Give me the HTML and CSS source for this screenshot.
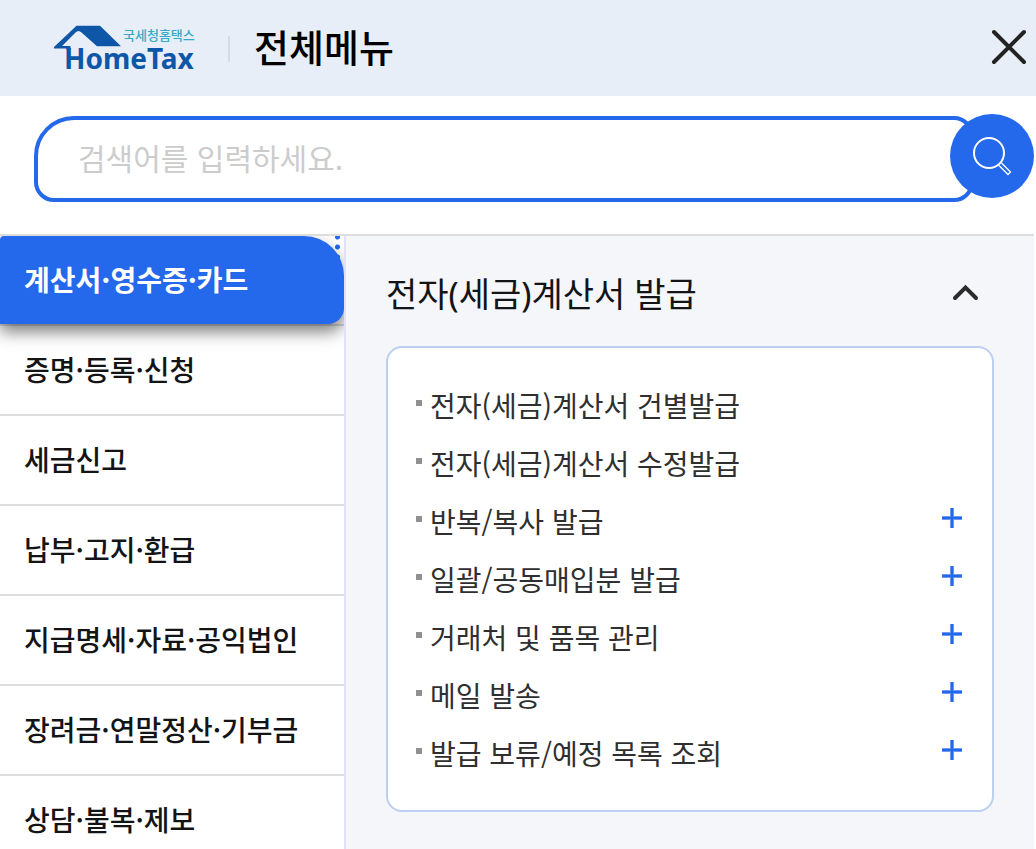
FILE: index.html
```
<!DOCTYPE html>
<html lang="ko">
<head>
<meta charset="utf-8">
<meta name="viewport" content="width=device-width, initial-scale=1">
<title>전체메뉴 - 국세청 홈택스</title>
<link rel="stylesheet" href="styles.css">
</head>
<body>
<header class="header">
  <a class="logo" href="#" aria-label="국세청홈택스 HomeTax">
    <svg viewBox="0 0 144 50" width="144" height="50" aria-hidden="true">
      <path class="logo-roof" d="M24.500 2.700H48L69 23.200H45L29.500 9.500Q26.500 6.500 23.500 9.500L10 23H18.500V27H14.500V25.500H2V24Z"/>
      <text class="logo-sub" x="71" y="17">국세청홈택스</text>
      <text class="logo-main" x="12" y="46">HomeTax</text>
    </svg>
  </a>
  <h1 class="title">전체메뉴</h1>
  <button class="close" type="button" aria-label="닫기">
    <svg viewBox="0 0 36 36" width="36" height="36" aria-hidden="true"><path d="M2 2 32 32M32 2 2 32"/></svg>
  </button>
</header>

<form class="search" role="search">
  <input class="search-input" type="search" placeholder="검색어를 입력하세요." aria-label="검색어">
  <button class="search-button" type="submit" aria-label="검색">
    <svg viewBox="0 0 40 40" width="40" height="40" aria-hidden="true">
      <circle class="lens" cx="17" cy="17" r="15"/>
      <path class="handle" d="M27 29.500 36 38.500 38.500 36 29.500 27"/>
    </svg>
  </button>
</form>

<main class="content">
  <nav class="sidebar" aria-label="전체메뉴">
    <ul class="menu">
      <li class="menu-item"><a class="menu-link menu-link-active" href="#" aria-current="true">계산서·영수증·카드</a></li>
      <li class="menu-item"><a class="menu-link" href="#">증명·등록·신청</a></li>
      <li class="menu-item"><a class="menu-link" href="#">세금신고</a></li>
      <li class="menu-item"><a class="menu-link" href="#">납부·고지·환급</a></li>
      <li class="menu-item"><a class="menu-link" href="#">지급명세·자료·공익법인</a></li>
      <li class="menu-item"><a class="menu-link" href="#">장려금·연말정산·기부금</a></li>
      <li class="menu-item"><a class="menu-link" href="#">상담·불복·제보</a></li>
    </ul>
  </nav>
  <section class="panel">
    <h2 class="panel-heading">
      <button class="panel-toggle" type="button" aria-expanded="true" aria-controls="issue-list">
        전자(세금)계산서 발급
        <svg class="chevron" viewBox="0 0 28 20" width="28" height="20" aria-hidden="true"><path d="M3 14 13.500 3.500 24 14"/></svg>
      </button>
    </h2>
    <ul class="card" id="issue-list">
      <li class="row"><a class="row-link" href="#">전자(세금)계산서 건별발급</a></li>
      <li class="row"><a class="row-link" href="#">전자(세금)계산서 수정발급</a></li>
      <li class="row"><a class="row-link" href="#">반복/복사 발급</a><button class="expand" type="button" aria-label="반복/복사 발급 펼치기"></button></li>
      <li class="row"><a class="row-link" href="#">일괄/공동매입분 발급</a><button class="expand" type="button" aria-label="일괄/공동매입분 발급 펼치기"></button></li>
      <li class="row"><a class="row-link" href="#">거래처 및 품목 관리</a><button class="expand" type="button" aria-label="거래처 및 품목 관리 펼치기"></button></li>
      <li class="row"><a class="row-link" href="#">메일 발송</a><button class="expand" type="button" aria-label="메일 발송 펼치기"></button></li>
      <li class="row"><a class="row-link" href="#">발급 보류/예정 목록 조회</a><button class="expand" type="button" aria-label="발급 보류/예정 목록 조회 펼치기"></button></li>
    </ul>
  </section>
</main>
</body>
</html>
```
FILE: styles.css
```
* {
  box-sizing: border-box;
}

body {
  display: flex;
  flex-direction: column;
  height: 100vh;
  margin: 0;
  overflow: hidden;
  background: #fff;
  color: #131416;
  font-family: "Noto Sans CJK KR", sans-serif;
}

h1,
h2,
ul {
  margin: 0;
  padding: 0;
}

ul {
  list-style: none;
}

a {
  color: inherit;
  text-decoration: none;
}

button {
  padding: 0;
  border: 0;
  background: none;
  color: inherit;
  font: inherit;
  cursor: pointer;
}

svg {
  display: block;
  overflow: visible;
  fill: none;
}

/* Header */
.header {
  display: flex;
  flex: none;
  align-items: center;
  height: 96px;
  padding: 0 8px 0 52px;
  background: #e8eef8;
}

.logo-roof {
  fill: #0e56a8;
}

.logo-sub {
  fill: #35a9c6;
  font-size: 13px;
  font-weight: 500;
}

.logo-main {
  fill: #0e56a8;
  font-family: "Noto Sans", sans-serif;
  font-size: 28px;
  font-weight: 700;
}

.title {
  display: flex;
  align-items: center;
  gap: 24px;
  margin-left: 32px;
  padding-bottom: 4px;
  color: #000;
  font-size: 38px;
  font-weight: 500;
  line-height: 56px;
}

.title::before {
  width: 2px;
  height: 26px;
  margin-top: 6px;
  background: #d8dade;
  content: "";
}

.close {
  margin-left: auto;
}

.close path {
  stroke: #222;
  stroke-linecap: round;
  stroke-width: 4;
}

/* Search */
.search {
  display: flex;
  flex: none;
  align-items: flex-start;
  height: 138px;
  padding: 18px 2px 0 34px;
}

.search-input {
  flex: 1;
  min-width: 0;
  height: 86px;
  margin: 2px 0 0;
  padding: 0 40px 4px;
  border: 4px solid #2468ec;
  border-radius: 40px 20px 20px 20px;
  outline: 0;
  background: #fff;
  color: #131416;
  font: 400 30px/44px "Noto Sans CJK KR", sans-serif;
  appearance: none;
}

.search-input::placeholder {
  color: #ccc;
  opacity: 1;
}

.search-button {
  z-index: 1;
  display: grid;
  flex: none;
  place-items: center;
  width: 84px;
  height: 84px;
  margin-left: -24px;
  border-radius: 50%;
  background: #2468ec;
}

.lens {
  stroke: #fff;
  stroke-width: 2;
}

.handle {
  stroke: #fff;
  stroke-width: 1.3;
}

/* Two-column menu */
.content {
  display: grid;
  flex: 1;
  grid-template-columns: 346fr 688fr;
  min-height: 0;
  margin-right: 2px;
  border-top: 2px solid #ddd;
}

.sidebar {
  overflow: hidden;
  border-right: 2px solid #e4e0fc;
}

.menu-item {
  border-bottom: 2px solid #ddd;
}

.menu-item:first-child {
  background: radial-gradient(circle, #2468ec 2px, transparent 3px) right 3px top -4px / 7px 10px repeat-y;
}

.menu-link {
  display: block;
  padding: 21px 24px 23px;
  font-size: 28px;
  font-weight: 500;
  line-height: 44px;
  white-space: nowrap;
}

.menu-link-active {
  border-radius: 4px 40px 16px 0;
  background: #2468ec;
  box-shadow: 0 8px 16px rgba(0, 0, 0, 0.5);
  color: #fff;
  font-weight: 700;
}

.panel {
  padding: 28px 40px;
  overflow: hidden;
  background: #f4f6fa;
}

.panel-heading {
  font-family: "Noto Sans", "Noto Sans CJK KR", sans-serif;
  font-size: 34px;
  font-weight: 400;
  line-height: 60px;
}

.panel-toggle {
  display: flex;
  align-items: center;
  justify-content: space-between;
  width: 100%;
  padding-right: 14px;
  white-space: nowrap;
}

.chevron path {
  stroke: #2b2b2b;
  stroke-linecap: round;
  stroke-width: 4;
}

.card {
  margin-top: 22px;
  padding: 28px;
  border: 2px solid #bccff0;
  border-radius: 16px;
  background: #fff;
}

.row {
  display: flex;
  justify-content: space-between;
  color: #2f2f2f;
  font-size: 28px;
  line-height: 58px;
}

.row-link {
  display: flex;
  gap: 8px;
}

.row-link::before {
  width: 6px;
  height: 6px;
  margin-top: 24px;
  background: #909090;
  content: "";
}

.expand {
  width: 24px;
  height: 52px;
  background:
    linear-gradient(#2468ec, #2468ec) center / 20px 2px no-repeat,
    linear-gradient(#2468ec, #2468ec) center / 2px 20px no-repeat,
    linear-gradient(#6c9af3, #6c9af3) center / 20px 4px no-repeat,
    linear-gradient(#6c9af3, #6c9af3) center / 4px 20px no-repeat;
}
```
